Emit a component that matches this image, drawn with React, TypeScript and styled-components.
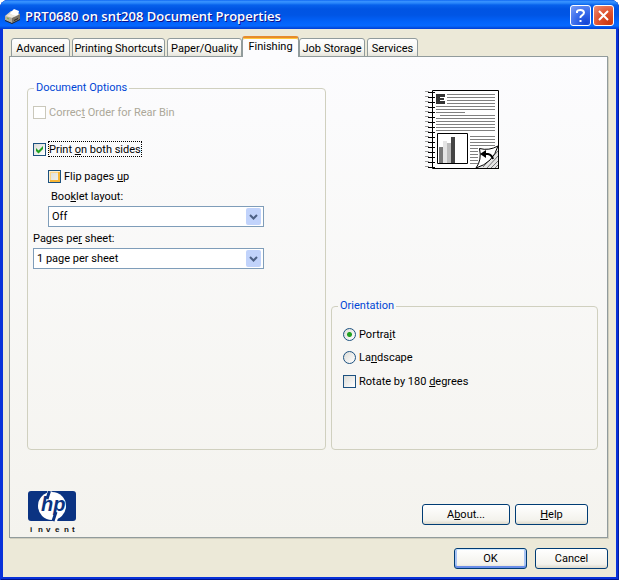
import React, { useState } from "react";
import type { ReactNode } from "react";
import styled, { createGlobalStyle, css } from "styled-components";

const GlobalStyle = createGlobalStyle`
  * { box-sizing: border-box; }
  body {
    margin: 0;
    background: #ffffff;
    color: #000000;
    font: 11px/16px Roboto, "Liberation Sans", sans-serif;
  }
  button, select, input { font: inherit; color: inherit; margin: 0; }
`;

const Window = styled.main`
  display: flex;
  flex-direction: column;
  min-height: 100vh;
  margin-right: 1px;
  border-radius: 8px 8px 0 0;
  overflow: hidden;
  background: linear-gradient(#0a5be8, #0831d9 30px);
  padding: 0 3px 3px;
  box-shadow: inset 1px 0 #0831d9, inset -1px 0 #001ea0, inset 0 -1px #00138c;
`;

const TitleBar = styled.header`
  display: flex;
  align-items: center;
  gap: 2px;
  height: 29px;
  margin: 0 -3px;
  padding: 2px 5px 0;
  background: linear-gradient(
    #0997ff 0, #0058ee 0, #3a93ff 1px, #2a87fb 3px, #0761ec 5px, #0054e3 9px,
    #0055e5 15px, #0263fb 22px, #0668ff 26px, #0458e8 27px, #003dd7 29px
  );
`;

const Title = styled.h1`
  flex: 1;
  margin: 0 0 0 2px;
  color: #ffffff;
  font: 600 13px/20px "Open Sans", "Noto Sans", sans-serif;
  text-shadow: 1px 1px #0f1089;
  white-space: nowrap;
`;

const CaptionButton = styled.button<{ $danger?: boolean }>`
  display: grid;
  place-items: center;
  width: 21px;
  height: 21px;
  padding: 0;
  border: 1px solid #ffffff;
  border-radius: 3px;
  background: ${(p) =>
    p.$danger
      ? "radial-gradient(circle at 80% 90%, #cc3810, #e0532f 50%, #ee9079)"
      : "radial-gradient(circle at 80% 90%, #1345d6, #3a6cec 50%, #7d9ff5)"};
`;

const Body = styled.div`
  flex: 1;
  display: flex;
  flex-direction: column;
  padding: 7px 8px 8px 6px;
  background: #ece9d8;
`;

const TabList = styled.div`
  position: relative;
  display: flex;
  align-items: flex-end;
  gap: 2px;
  height: 21px;
  padding-left: 2px;
  margin-bottom: -1px;
`;

const Tab = styled.button<{ $width: number; $active?: boolean }>`
  width: ${(p) => p.$width}px;
  height: 19px;
  padding: 2px 0 0;
  border: 1px solid #919b9c;
  border-radius: 3px 3px 0 0;
  background: linear-gradient(#ffffff, #f6f5f0 70%, #e6e5dc);
  line-height: 15px;
  white-space: nowrap;
  ${(p) =>
    p.$active &&
    css`
      height: 21px;
      margin: 0 -2px;
      padding: 0 0 2px;
      border-top: 2px solid #e68b2c;
      border-bottom: 0;
      background: #fcfcfe;
      box-shadow: inset 0 1px #ffc73c;
      z-index: 1;
    `}
`;

const Panel = styled.section`
  flex: 1;
  display: flex;
  flex-direction: column;
  justify-content: space-between;
  border: 1px solid #919b9c;
  background: linear-gradient(#fcfcfe, #f4f3ee);
  box-shadow: 1px 1px #d0cebf;
  padding: 24px 9px 3px 17px;
`;

const Columns = styled.div`
  display: grid;
  grid-template-columns: 299fr 267fr;
  gap: 5px;
`;

const Side = styled.div`
  display: flex;
  flex-direction: column;
  justify-content: space-between;
`;

const Preview = styled.div`
  padding: 9px 0 0 94px;
  svg { display: block; }
`;

const Group = styled.fieldset<{ $top: number; $height: number; $inset: number }>`
  display: flex;
  flex-direction: column;
  min-width: 0;
  min-height: ${(p) => p.$height}px;
  margin: 0;
  padding: ${(p) => p.$top}px 5px 0 ${(p) => p.$inset}px;
  border: 1px solid #d0d0bf;
  border-radius: 4px;
`;

const Legend = styled.legend<{ $inset: number }>`
  margin-left: ${(p) => 6 - p.$inset}px;
  padding: 0 2px;
  color: #0046d5;
  line-height: 14px;
`;

const Option = styled.label<{ $gap?: number; $indent?: boolean; $disabled?: boolean }>`
  display: flex;
  align-items: center;
  align-self: flex-start;
  gap: 2px;
  height: 16px;
  margin-bottom: ${(p) => p.$gap ?? 0}px;
  margin-left: ${(p) => (p.$indent ? 15 : 0)}px;
  color: ${(p) => (p.$disabled ? "#aca899" : "inherit")};
  white-space: nowrap;
`;

const OptionText = styled.span<{ $focused?: boolean }>`
  padding: 2px 1px 0;
  line-height: 14px;
  outline: ${(p) => (p.$focused ? "1px dotted #000000" : "none")};
  outline-offset: -1px;
`;

const tick = `url("data:image/svg+xml,%3Csvg xmlns='http://www.w3.org/2000/svg' width='11' height='11'%3E%3Cpath d='M2 4v3l2.500 2.500L9 5V2L4.500 6.500z' fill='%2321a121'/%3E%3C/svg%3E")`;

const Check = styled.input.attrs({ type: "checkbox" })<{ $hot?: boolean }>`
  appearance: none;
  flex: none;
  width: 13px;
  height: 13px;
  border: 1px solid #1c5180;
  background: linear-gradient(135deg, #dcdcd7, #ffffff);
  &:checked { background: ${tick} center no-repeat, linear-gradient(135deg, #dcdcd7, #ffffff); }
  &:disabled { border-color: #cac8bb; background: #ffffff; }
  ${(p) =>
    p.$hot &&
    css`
      background: linear-gradient(135deg, #dcdcd7, #f3f3ef);
      box-shadow: inset 1px 1px #fff0cf, inset -2px -2px #f8b636, inset 2px 2px #fbd589;
    `}
`;

const Radio = styled.input.attrs({ type: "radio" })`
  appearance: none;
  flex: none;
  width: 13px;
  height: 13px;
  border: 1px solid #1c5180;
  border-radius: 50%;
  background: linear-gradient(135deg, #dcdcd7, #ffffff);
  &:checked {
    background: radial-gradient(circle, #21a121 2px, transparent 3px),
      linear-gradient(135deg, #dcdcd7, #ffffff);
  }
`;

const FieldLabel = styled.label<{ $indent?: boolean }>`
  align-self: flex-start;
  padding-top: 1px;
  margin: 0 0 1px ${(p) => (p.$indent ? 18 : 0)}px;
`;

const SelectFrame = styled.div<{ $indent?: boolean }>`
  display: grid;
  grid-template-columns: 1fr 19px;
  align-items: center;
  height: 21px;
  margin: 0 56px 3px ${(p) => (p.$indent ? 15 : 0)}px;
  border: 1px solid #7f9db9;
  background: #ffffff;
`;

const Select = styled.select`
  grid-area: 1 / 1 / 2 / 3;
  appearance: none;
  height: 19px;
  padding: 1px 20px 0 3px;
  border: 0;
  background: transparent;
`;

const Arrow = styled.svg`
  grid-area: 1 / 2 / 2 / 3;
  justify-self: center;
  pointer-events: none;
`;

const PanelFooter = styled.div`
  display: flex;
  justify-content: space-between;
  align-items: flex-start;
  svg { display: block; }
`;

const Buttons = styled.div<{ $gap: number; $top: number }>`
  display: flex;
  justify-content: flex-end;
  gap: ${(p) => p.$gap}px;
  padding-top: ${(p) => p.$top}px;
`;

const PushButton = styled.button<{ $wide?: boolean; $default?: boolean }>`
  width: ${(p) => (p.$wide ? 88 : 73)}px;
  height: 21px;
  padding: 1px 0 0;
  border: 1px solid #003c74;
  border-radius: 3px;
  background: linear-gradient(#ffffff, #f3f2ec 80%, #dcd8cc);
  box-shadow: ${(p) =>
    p.$default
      ? "inset 0 -2px #6a8ee8, inset 0 1px #cee7ff, inset 2px 0 #a9c4f5, inset -2px 0 #a9c4f5"
      : "none"};
`;

const FooterInset = styled.div`
  padding-right: 10px;
`;

function PrinterIcon() {
  return (
    <svg width="16" height="16" viewBox="0 0 16 16" aria-hidden="true">
      <path d="M0 8 6 3l9 3v5l-8 4-7-4z" fill="#d8d3c4" />
      <path d="M7 10 0 8v4l7 3z" fill="#b1ab9d" />
      <path d="M7 10 15 6v5l-8 4z" fill="#777267" />
      <path d="M6 4l3-3 5 2-1 4-3 1-5-2z" fill="#ffffff" />
      <path d="M2 8l5 1.500L11 8 5 6z" fill="#eee9dc" />
      <path d="M0 12l7 3 8-4v1l-8 4-7-3zM9 12l4-2v1l-4 2z" fill="#24221f" />
      <path d="M2 10l2 1" stroke="#6fb143" />
    </svg>
  );
}

function DocumentPreview() {
  const lines = [4, 7, 10, 13, 16, 28, 31, 34, 37, 40];
  const sideLines = [46, 49, 52, 55, 58, 61, 64, 67, 70, 73];
  return (
    <svg width="74" height="79" viewBox="0 0 74 79" role="img" aria-label="Page preview">
      <path d="M7.500 .500h66v78h-66z" fill="#ffffff" stroke="#000000" />
      {Array.from({ length: 16 }, (_, i) => (
        <g key={i} fill="none">
          <path d={`M3 ${2.5 + i * 5}h7`} stroke="#000000" />
          <path d={`M0 ${1.5 + i * 5}h4`} stroke="#999999" />
        </g>
      ))}
      <g stroke="#808080" transform="translate(0 .5)">
        {lines.map((y, i) => (
          <path key={y} d={`M${i < 4 ? 22 : 11} ${y}H70`} />
        ))}
        <path d="M11 19h59M11 22h29M15 25h55" />
        {sideLines.map((y, i) => (
          <path key={y} d={`M45 ${y}H${i < 4 ? 70 : 53}`} />
        ))}
      </g>
      <path d="M11 4h9v3h-5v1h4v2h-4v1h5v3h-9z" fill="#333333" />
      <path d="M12.500 43.500h30v30h-30z" fill="#ffffff" stroke="#000000" />
      <path d="M14 57h4v16h-4z" fill="#777777" />
      <path d="M18 51h4v22h-4z" fill="#e4e4e4" />
      <path d="M22 53h4v20h-4z" fill="#bbbbbb" />
      <path d="M26 47h4v26h-4z" fill="#444444" />
      <path d="M73 56Q70 72 51 78h22z" fill="#e4e4e4" />
      <path d="M73 61 58 77M73 66 62 78M73 71 66 78M73 75 70 78" stroke="#777777" />
      <path d="M73 56Q64 61 54.500 58.500 57 70 51 78 68 73 73 56z" fill="#ffffff" stroke="#000000" />
      <path d="M58 64h5q4 1 5 5" fill="none" stroke="#000000" strokeWidth="2" />
      <path d="M55 64l6-4v8z" fill="#000000" />
      <path d="M51 78.500h23M73.500 55v24" stroke="#000000" />
    </svg>
  );
}

function Logo() {
  return (
    <svg width="50" height="43" viewBox="0 0 50 43" role="img" aria-label="hp invent">
      <rect x="1" y="0" width="48" height="30" rx="3" fill="#0b3382" />
      <circle cx="25" cy="15" r="14" fill="#ffffff" />
      <path d="M20.500 8 23 0M27.500 30l2.500-8" stroke="#ffffff" strokeWidth="5" />
      <path d="M20 8 22.500 0M26 30l3-9" stroke="#0b3382" strokeWidth="3" />
      <text x="14" y="20" fill="#0b3382" fontFamily="Liberation Sans" fontSize="20" fontStyle="italic" fontWeight="700">
        hp
      </text>
      <text x="3 11 19 28 37 45" y="41" fill="#111111" fontFamily="Liberation Sans" fontSize="8" fontWeight="700">
        invent
      </text>
    </svg>
  );
}

interface DropDownProps {
  id: string;
  label: ReactNode;
  options: string[];
  indent?: boolean;
}

function DropDown({ id, label, options, indent }: DropDownProps) {
  return (
    <>
      <FieldLabel htmlFor={id} $indent={indent}>{label}</FieldLabel>
      <SelectFrame $indent={indent}>
        <Select id={id}>
          {options.map((o) => (
            <option key={o}>{o}</option>
          ))}
        </Select>
        <Arrow width="15" height="17" viewBox="0 0 15 17" aria-hidden="true">
          <rect width="15" height="17" rx="2" fill="#c1d3fb" />
          <path d="M4 7l3.500 3.500L11 7" fill="none" stroke="#4d6185" strokeWidth="2" />
        </Arrow>
      </SelectFrame>
    </>
  );
}

const tabs = [
  { name: "Advanced", width: 59 },
  { name: "Printing Shortcuts", width: 93 },
  { name: "Paper/Quality", width: 75 },
  { name: "Finishing", width: 57 },
  { name: "Job Storage", width: 66 },
  { name: "Services", width: 51 },
];

export default function App() {
  const [active, setActive] = useState("Finishing");
  const [orientation, setOrientation] = useState("portrait");
  return (
    <Window>
      <GlobalStyle />
      <TitleBar>
        <PrinterIcon />
        <Title>PRT0680 on snt208 Document Properties</Title>
        <CaptionButton aria-label="Help">
          <svg width="19" height="19" viewBox="0 0 19 19" fill="none" stroke="#ffffff" strokeWidth="2">
            <path d="M6 7V5.500Q6.500 4 9.500 4T13 6.500Q13 8 11 9.300T9.500 12M9.500 14v2" />
          </svg>
        </CaptionButton>
        <CaptionButton $danger aria-label="Close">
          <svg width="19" height="19" viewBox="0 0 19 19" stroke="#ffffff" strokeWidth="2">
            <path d="M5 5l9 9M14 5l-9 9" />
          </svg>
        </CaptionButton>
      </TitleBar>
      <Body>
        <TabList role="tablist">
          {tabs.map((t) => (
            <Tab
              key={t.name}
              role="tab"
              aria-selected={t.name === active}
              $width={t.width}
              $active={t.name === active}
              onClick={() => setActive(t.name)}
            >
              {t.name}
            </Tab>
          ))}
        </TabList>
        <Panel>
          <Columns>
            <Group $top={9} $height={369} $inset={5}>
              <Legend $inset={5}>Document Options</Legend>
              <Option $gap={21} $disabled>
                <Check disabled />
                <OptionText>Correc<u>t</u> Order for Rear Bin</OptionText>
              </Option>
              <Option $gap={11}>
                <Check defaultChecked />
                <OptionText $focused>Print <u>o</u>n both sides</OptionText>
              </Option>
              <Option $gap={4} $indent>
                <Check $hot />
                <OptionText>Flip pages <u>u</u>p</OptionText>
              </Option>
              <DropDown id="booklet" indent label={<>Boo<u>k</u>let layout:</>} options={["Off", "Left edge binding", "Right edge binding"]} />
              <DropDown id="pages" label={<>Pages pe<u>r</u> sheet:</>} options={["1 page per sheet", "2 pages per sheet", "4 pages per sheet"]} />
            </Group>
            <Side>
              <Preview>
                <DocumentPreview />
              </Preview>
              <Group $top={13} $height={151} $inset={11}>
                <Legend $inset={11}>Orientation</Legend>
                <Option $gap={7}>
                  <Radio name="orientation" checked={orientation === "portrait"} onChange={() => setOrientation("portrait")} />
                  <OptionText>Portra<u>i</u>t</OptionText>
                </Option>
                <Option $gap={8}>
                  <Radio name="orientation" checked={orientation === "landscape"} onChange={() => setOrientation("landscape")} />
                  <OptionText>La<u>n</u>dscape</OptionText>
                </Option>
                <Option>
                  <Check />
                  <OptionText>Rotate by 180 <u>d</u>egrees</OptionText>
                </Option>
              </Group>
            </Side>
          </Columns>
          <PanelFooter>
            <Logo />
            <FooterInset>
              <Buttons $gap={5} $top={13}>
                <PushButton $wide>A<u>b</u>out...</PushButton>
                <PushButton><u>H</u>elp</PushButton>
              </Buttons>
            </FooterInset>
          </PanelFooter>
        </Panel>
        <Buttons $gap={8} $top={10}>
          <PushButton $default>OK</PushButton>
          <PushButton>Cancel</PushButton>
        </Buttons>
      </Body>
    </Window>
  );
}
